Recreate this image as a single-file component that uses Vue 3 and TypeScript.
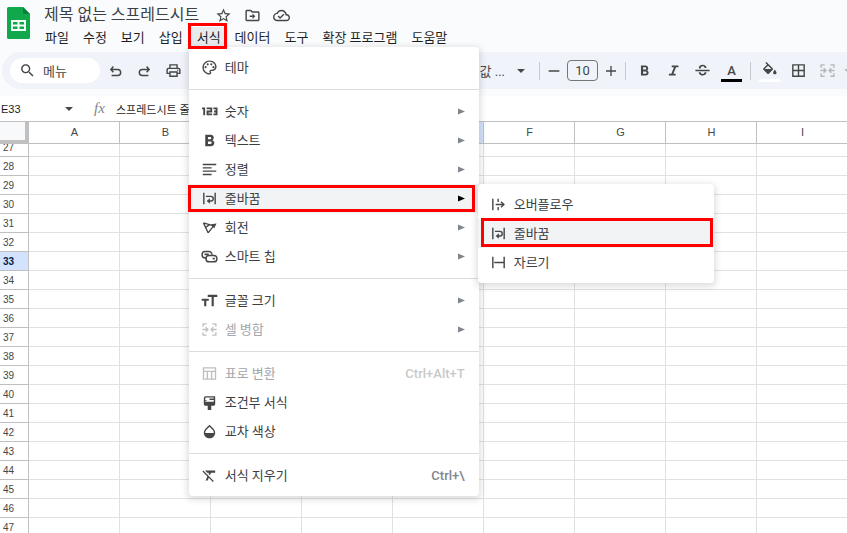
<script setup lang="ts">
import { computed, ref } from 'vue'

interface Shape {
  d: string
  line?: number
}

interface MenuEntry {
  icon: string
  label: string
  submenu?: boolean
  shortcut?: string
  disabled?: boolean
}

const icons: Record<string, Shape[]> = {
  search: [{ d: 'M15.5 14h-.79l-.28-.27C15.41 12.59 16 11.11 16 9.5 16 5.91 13.09 3 9.5 3S3 5.91 3 9.5 5.91 16 9.5 16c1.61 0 3.09-.59 4.23-1.57l.27.28v.79l5 4.99L20.49 19l-4.99-5zm-6 0C7.01 14 5 11.99 5 9.5S7.01 5 9.5 5 14 7.01 14 9.5 11.99 14 9.5 14z' }],
  star: [{ d: 'M22 9.24l-7.19-.62L12 2 9.19 8.63 2 9.24l5.46 4.73L5.82 21 12 17.27 18.18 21l-1.63-7.03L22 9.24zM12 15.4l-3.76 2.27 1-4.28-3.32-2.88 4.38-.38L12 6.1l1.71 4.04 4.38.38-3.32 2.88 1 4.28L12 15.4z' }],
  folder: [{ d: 'M20 6h-8l-2-2H4c-1.1 0-2 .9-2 2v12c0 1.1.9 2 2 2h16c1.1 0 2-.9 2-2V8c0-1.1-.9-2-2-2zm0 12H4V6h5.17l2 2H20v10zm-8-1l4-4-4-4v3H8v2h4v3z' }],
  cloud: [{ d: 'M19.35 10.04C18.67 6.59 15.64 4 12 4 9.11 4 6.6 5.64 5.35 8.04 2.34 8.36 0 10.91 0 14c0 3.31 2.69 6 6 6h13c2.76 0 5-2.24 5-5 0-2.64-2.05-4.78-4.65-4.96zM19 18H6c-2.21 0-4-1.79-4-4 0-2.05 1.53-3.76 3.56-3.97l1.07-.11.5-.95C8.08 7.14 9.94 6 12 6c2.62 0 4.88 1.86 5.39 4.43l.3 1.5 1.53.11c1.56.1 2.78 1.41 2.78 2.96 0 1.65-1.35 3-3 3zm-9-3.82l-2.09-2.09L6.5 13.5 10 17l6.01-6.01-1.41-1.41z' }],
  undo: [{ d: 'M9 6.500L5.500 10.500 9 14.500M5.500 10.500H15a4.300 4.300 0 0 1 0 8.600H6.500', line: 2.1 }],
  redo: [{ d: 'M15 6.500l3.500 4-3.500 4M18.500 10.500H9a4.300 4.300 0 0 0 0 8.600H17.500', line: 2.1 }],
  print: [{ d: 'M19 8h-1V3H6v5H5c-1.66 0-3 1.34-3 3v6h4v4h12v-4h4v-6c0-1.66-1.34-3-3-3zM8 5h8v3H8V5zm8 12v2H8v-4h8v2zm2-2v-2H6v2H4v-4c0-.55.45-1 1-1h14c.55 0 1 .45 1 1v4h-2zM17 11.5a1 1 0 1 0 2 0 1 1 0 1 0-2 0z' }],
  minus: [{ d: 'M4 12h16', line: 2 }],
  plus: [{ d: 'M4.500 12h15M12 4.500v15', line: 2 }],
  bold: [{ d: 'M15.6 11.790c.97-.67 1.65-1.77 1.65-2.79 0-2.26-1.75-4-4-4H7v14h7.04c2.09 0 3.71-1.7 3.71-3.79 0-1.52-.86-2.82-2.15-3.42zM10 7.500h3c.83 0 1.5.67 1.5 1.5s-.67 1.5-1.5 1.5h-3v-3zm3.5 9H10v-3h3.5c.83 0 1.5.67 1.5 1.5s-.67 1.5-1.5 1.5z' }],
  italic: [{ d: 'M9.500 5v2.500h3.200l-3.800 9H5.500V19h9.500v-2.500h-3.200l3.800-9H19V5z' }],
  strike: [{ d: 'M6.85 8.080C6.85 5.370 9.45 4 12.24 4c1.64 0 3 .49 3.9 1.28.77.65 1.46 1.73 1.46 3.24h-2.600c0-.31-.05-.59-.15-.85-.29-.86-1.500-1.580-2.550-1.580-1.86 0-2.840 1.220-2.840 1.900 0 .48.25.88.74 1.21H7.390c-.21-.34-.54-.89-.54-1.120zM22 13v-2H2v2zM14.880 14.600c0 1.400-1.110 2.400-2.580 2.400-1.540 0-2.930-.84-2.930-2.400H6.700c0 .55.08.83.24 1.280.81 2.290 3.090 3.300 5.370 3.300 2.270 0 5.300-1.100 5.300-4.580z' }],
  fill: [{ d: 'M16.56 8.940L7.62 0 6.210 1.410l2.380 2.380-5.150 5.150c-.59.59-.59 1.54 0 2.12l5.5 5.5c.29.29.68.44 1.06.44s.77-.15 1.060-.44l5.5-5.5c.59-.58.59-1.53 0-2.12zM5.210 10L10 5.210 14.790 10H5.210zM19.500 11s-2.400 2.570-2.400 4.100c0 1.300 1.100 2.300 2.400 2.300s2.400-1 2.400-2.300c0-1.530-2.400-4.100-2.400-4.100z' }],
  borders: [{ d: 'M3 3v18h18V3H3zm8 16H5v-6h6v6zm0-8H5V5h6v6zm8 8h-6v-6h6v6zm0-8h-6V5h6v6z' }],
  merge: [{ d: 'M3 8V4h5M16 4h5v4M3 16v4h5M16 20h5v-4M2 12h7.500M6.500 8.700L9.800 12l-3.300 3.300M22 12h-7.500M17.500 8.700L14.200 12l3.300 3.300', line: 1.8 }],
  palette: [
    { d: 'M12 22C6.49 22 2 17.51 2 12S6.49 2 12 2s10 4.04 10 9c0 3.31-2.69 6-6 6h-1.77c-.28 0-.5.22-.5.5 0 .12.05.23.13.33.41.47.64 1.06.64 1.67A2.5 2.5 0 0 1 12 22zm0-18c-4.41 0-8 3.59-8 8s3.59 8 8 8c.28 0 .5-.22.5-.5a.54.54 0 0 0-.14-.35c-.41-.46-.63-1.05-.63-1.65a2.5 2.5 0 0 1 2.5-2.5H16c2.21 0 4-1.79 4-4 0-3.86-3.59-7-8-7z' },
    { d: 'M5 11.500a1.500 1.500 0 1 0 3 0 1.500 1.500 0 1 0-3 0zM8 7.500a1.500 1.500 0 1 0 3 0 1.500 1.500 0 1 0-3 0zM13 7.500a1.500 1.500 0 1 0 3 0 1.500 1.500 0 1 0-3 0zM16 11.500a1.500 1.500 0 1 0 3 0 1.500 1.500 0 1 0-3 0z' },
  ],
  number: [{ d: 'M1.500 7.500H4.500V17.300M8 7.500h6.500v4.500H9.200v4H15.500M17.500 7.500H22v8.500H17.500M18.500 12h3.500', line: 2.6 }],
  text: [{ d: 'M6 4h7.500c2.700 0 4.500 1.700 4.500 4.100 0 1.500-.8 2.700-2 3.400 1.700.6 2.800 2.100 2.800 4 0 2.700-2 4.500-4.800 4.500H6zM9.800 7.200v3h3.100c1 0 1.600-.6 1.600-1.500s-.6-1.500-1.600-1.500zM9.800 13.400v3.400h3.500c1.100 0 1.800-.7 1.800-1.700s-.7-1.700-1.800-1.700z' }],
  align: [{ d: 'M2.500 5h19M2.500 9.700h12.500M2.500 14.300h19M2.500 19h12.500', line: 2 }],
  wrap: [
    { d: 'M4 4v16M20 4v16', line: 2 },
    { d: 'M7 9h7a3.300 3.300 0 0 1 0 6.600h-2.500', line: 2 },
    { d: 'M12.500 11.500v8L8 15.500z' },
  ],
  overflow: [
    { d: 'M4 4v16M11.500 4v4.500M11.500 15.500V20M8 12h12', line: 2 },
    { d: 'M15.500 8L19.500 12l-4 4', line: 2 },
  ],
  clip: [{ d: 'M4 4v16M20 4v16M6 12h13', line: 2 }],
  rotate: [
    { d: 'M3.500 5.500l15.500 4.500M3.500 5.500l6.500 14M10 19.500L17.500 10M6.500 12l5.500-4', line: 1.9 },
    { d: 'M14 7.500l8-1-3.500 7z' },
  ],
  chip: [
    { d: 'M15.500 9.500A4.300 4.300 0 0 0 11 5H6a4.500 4.500 0 0 0 0 9h2', line: 2 },
    { d: 'M11.500 10.500h6.500a4.500 4.500 0 0 1 0 9h-6.500a4.500 4.500 0 0 1 0-9z', line: 2 },
    { d: 'M5 9h6M16.500 15h3', line: 2.4 },
  ],
  size: [{ d: 'M9.500 4v3h5.500v13h3V7h5V4zM1 9.500v3h3.500V20h3v-7.500H11v-3z' }],
  table: [{ d: 'M3.500 4h17v16h-17zM3.500 9h17M9 9v11M15 9v11', line: 1.9 }],
  brush: [
    { d: 'M5 12V5.500A1.500 1.500 0 0 1 6.500 4H19v8', line: 2 },
    { d: 'M4 11h16v3.500a2 2 0 0 1-2 2h-3.500v6h-5v-6H6a2 2 0 0 1-2-2zM12 6.500h7v1.800h-7zM5 8.500h3v1h-3z' },
  ],
  drop: [{ d: 'M17.66 8L12 2.35 6.34 8C4.78 9.56 4 11.64 4 13.64s.78 4.11 2.34 5.67 3.61 2.35 5.66 2.35 4.1-.79 5.66-2.35S20 15.64 20 13.64 19.22 9.56 17.66 8zM6 14c.01-2 .62-3.27 1.76-4.4L12 5.27l4.24 4.38C17.38 10.77 17.99 12 18 14H6z' }],
  clear: [{ d: 'M3.27 5L2 6.27l6.97 6.97L6.5 19h3l1.57-3.66L16.73 21 18 19.73 3.55 5.27 3.27 5zM6 5v.18L8.82 8h2.4l-.72 1.68 2.1 2.1L14.21 8H20V5H6z' }],
}

const titleIcons = [
  { icon: 'star', label: '별표' },
  { icon: 'folder', label: '이동' },
  { icon: 'cloud', label: '문서 상태' },
]

const menus = ['파일', '수정', '보기', '삽입', '서식', '데이터', '도구', '확장 프로그램', '도움말']
const openMenu = ref('서식')

const sections: MenuEntry[][] = [
  [{ icon: 'palette', label: '테마' }],
  [
    { icon: 'number', label: '숫자', submenu: true },
    { icon: 'text', label: '텍스트', submenu: true },
    { icon: 'align', label: '정렬', submenu: true },
    { icon: 'wrap', label: '줄바꿈', submenu: true },
    { icon: 'rotate', label: '회전', submenu: true },
    { icon: 'chip', label: '스마트 칩', submenu: true },
  ],
  [
    { icon: 'size', label: '글꼴 크기', submenu: true },
    { icon: 'merge', label: '셀 병합', submenu: true, disabled: true },
  ],
  [
    { icon: 'table', label: '표로 변환', shortcut: 'Ctrl+Alt+T', disabled: true },
    { icon: 'brush', label: '조건부 서식' },
    { icon: 'drop', label: '교차 색상' },
  ],
  [{ icon: 'clear', label: '서식 지우기', shortcut: 'Ctrl+\\' }],
]
const openItem = ref('줄바꿈')

const wrapModes: MenuEntry[] = [
  { icon: 'overflow', label: '오버플로우' },
  { icon: 'wrap', label: '줄바꿈' },
  { icon: 'clip', label: '자르기' },
]
const wrapMode = ref('줄바꿈')

const fontSize = ref('10')
const cellName = ref('E33')
const formula = ref('스프레드시트 줄바꿈')

const columns = 'ABCDEFGHI'.split('')
const rows = Array.from({ length: 21 }, (_, i) => i + 27)
const activeColumn = computed(() => cellName.value.charAt(0))
const activeRow = computed(() => Number(cellName.value.slice(1)))
</script>

<template>
  <div class="app">
    <header class="top">
      <div class="brand">
        <svg class="logo" viewBox="0 0 23 32" aria-hidden="true">
          <path fill="#0fa94c" d="M1.500 0H16l7 7v23.500A1.500 1.500 0 0 1 21.500 32H1.500A1.500 1.500 0 0 1 0 30.500V1.500A1.500 1.500 0 0 1 1.500 0z" />
          <path fill="#078038" d="M16 0l7 7h-6a1 1 0 0 1-1-1z" />
          <path fill="#f4fff8" fill-rule="evenodd" d="M4 13h15v11H4zM6 15v2.500h4.500V15zM12.500 15v2.500H17V15zM6 19.500V22h4.500v-2.500zM12.500 19.500V22H17v-2.500z" />
        </svg>
        <div class="heading">
          <div class="title-row">
            <h1>제목 없는 스프레드시트</h1>
            <button v-for="t in titleIcons" :key="t.icon" type="button" class="title-button" :aria-label="t.label">
              <svg viewBox="0 0 24 24"><path v-for="s in icons[t.icon]" :key="s.d" :d="s.d" /></svg>
            </button>
          </div>
          <nav class="menubar">
            <div v-for="m in menus" :key="m" class="menu-slot">
              <button type="button" class="menu-button" :class="{ open: m === openMenu }" @click="openMenu = m">{{ m }}</button>
              <span v-if="m === '서식'" class="mark mark-menu"></span>
              <div v-if="m === '서식' && m === openMenu" class="dropdown">
                <ul v-for="(section, i) in sections" :key="i">
                  <li v-for="e in section" :key="e.label">
                    <button type="button" class="item" :class="{ active: e.label === openItem }" :disabled="e.disabled">
                      <svg class="item-icon" viewBox="0 0 24 24">
                        <path v-for="s in icons[e.icon]" :key="s.d" :d="s.d" :class="{ stroke: s.line }" :stroke-width="s.line" />
                      </svg>
                      <span class="label">{{ e.label }}</span>
                      <kbd v-if="e.shortcut">{{ e.shortcut }}</kbd>
                      <svg v-if="e.submenu" class="arrow" viewBox="0 0 7 7"><path d="M0 0.500v6L7 3.500z" /></svg>
                    </button>
                    <template v-if="e.label === openItem">
                      <span class="mark mark-item"></span>
                      <ul class="dropdown flyout">
                        <li v-for="w in wrapModes" :key="w.label">
                          <button type="button" class="item" :class="{ active: w.label === wrapMode }" @click="wrapMode = w.label">
                            <svg class="item-icon" viewBox="0 0 24 24">
                              <path v-for="s in icons[w.icon]" :key="s.d" :d="s.d" :class="{ stroke: s.line }" :stroke-width="s.line" />
                            </svg>
                            <span class="label">{{ w.label }}</span>
                          </button>
                          <span v-if="w.label === wrapMode" class="mark mark-choice"></span>
                        </li>
                      </ul>
                    </template>
                  </li>
                </ul>
              </div>
            </div>
          </nav>
        </div>
      </div>

      <div class="toolbar">
        <button type="button" class="search">
          <svg viewBox="0 0 24 24"><path :d="icons.search[0].d" /></svg>메뉴
        </button>
        <button v-for="n in ['undo', 'redo', 'print']" :key="n" type="button" class="tool" :aria-label="n">
          <svg viewBox="0 0 24 24">
            <path v-for="s in icons[n]" :key="s.d" :d="s.d" :class="{ stroke: s.line }" :stroke-width="s.line" />
          </svg>
        </button>
        <button type="button" class="font-picker">기본값 ...<svg class="caret" viewBox="0 0 8 4"><path d="M0 0h8L4 4z" /></svg></button>
        <span class="divider"></span>
        <div class="size-group">
          <button type="button" aria-label="글꼴 크기 줄이기"><svg viewBox="0 0 24 24"><path :d="icons.minus[0].d" class="stroke" stroke-width="2" /></svg></button>
          <input v-model="fontSize" aria-label="글꼴 크기" />
          <button type="button" aria-label="글꼴 크기 늘리기"><svg viewBox="0 0 24 24"><path :d="icons.plus[0].d" class="stroke" stroke-width="2" /></svg></button>
        </div>
        <span class="divider"></span>
        <button v-for="n in ['bold', 'italic', 'strike']" :key="n" type="button" class="tool" :aria-label="n">
          <svg viewBox="0 0 24 24"><path :d="icons[n][0].d" /></svg>
        </button>
        <button type="button" class="tool swatch" aria-label="텍스트 색상">A</button>
        <span class="divider"></span>
        <button type="button" class="tool swatch white" aria-label="채우기 색상">
          <svg viewBox="0 0 24 24"><path :d="icons.fill[0].d" /></svg>
        </button>
        <button type="button" class="tool" aria-label="테두리">
          <svg viewBox="0 0 24 24"><path :d="icons.borders[0].d" /></svg>
        </button>
        <button type="button" class="tool faded" aria-label="셀 병합">
          <svg viewBox="0 0 24 24"><path :d="icons.merge[0].d" class="stroke" stroke-width="2" /></svg>
        </button>
        <button type="button" class="tool-more faded" aria-label="병합 유형">
          <svg class="caret" viewBox="0 0 8 4"><path d="M0 0h8L4 4z" /></svg>
        </button>
      </div>
    </header>

    <div class="formula-bar">
      <input v-model="cellName" class="cell-name" aria-label="이름 상자" />
      <svg class="caret" viewBox="0 0 8 4"><path d="M0 0h8L4 4z" /></svg>
      <label for="formula">fx</label>
      <input id="formula" v-model="formula" class="formula" />
    </div>

    <main class="sheet">
      <table>
        <thead>
          <tr>
            <th class="corner"></th>
            <th v-for="c in columns" :key="c" :class="{ selected: c === activeColumn }">{{ c }}</th>
          </tr>
        </thead>
        <tbody>
          <tr v-for="(r, i) in rows" :key="r" :class="{ cut: i === 0 }">
            <th :class="{ selected: r === activeRow }"><span>{{ r }}</span></th>
            <td v-for="c in columns" :key="c"></td>
          </tr>
        </tbody>
      </table>
    </main>
  </div>
</template>

<style>
body {
  overflow: hidden;
}
</style>

<style scoped>
.app {
  display: flex;
  flex-direction: column;
  height: 100vh;
  overflow: hidden;
  background: #fff;
  color: #1f1f1f;
  font-family: Roboto, 'Noto Sans CJK KR', sans-serif;
  font-size: 13px;
}

.app *,
.app *::after {
  box-sizing: border-box;
}

button,
input {
  margin: 0;
  padding: 0;
  border: 0;
  background: none;
  color: inherit;
  font: inherit;
}

ul {
  margin: 0;
  padding: 0;
  list-style: none;
}

svg {
  display: block;
  flex: none;
  fill: currentColor;
}

.stroke {
  fill: none;
  stroke: currentColor;
}

.top {
  padding: 3px 0 7px;
  background: #f9fbfd;
}

.brand {
  display: flex;
  align-items: flex-start;
  padding-left: 7px;
}

.logo {
  width: 23px;
  height: 32px;
  margin-top: 4px;
}

.heading {
  margin-left: 8px;
}

.title-row {
  display: flex;
  align-items: center;
  gap: 12px;
  height: 24px;
  padding-left: 6px;
}

h1 {
  margin: 0 4px 0 0;
  color: #3c4043;
  font-size: 16px;
  font-weight: 400;
  line-height: 24px;
  white-space: nowrap;
}

.title-button {
  color: #444746;
}

.title-button svg {
  width: 17px;
  height: 17px;
}

.menubar {
  display: flex;
}

.menu-slot {
  position: relative;
}

.menu-button {
  height: 22px;
  padding: 0 7px;
  line-height: 22px;
  white-space: nowrap;
}

.menu-button.open {
  background: #e8ebee;
}

.mark {
  position: absolute;
  z-index: 3;
  border: 3px solid #f00;
  pointer-events: none;
}

.mark-menu {
  inset: -4px 1px 0 -2px;
}

.mark-item {
  inset: 1px 4px 1px -1px;
}

.mark-choice {
  inset: -1px 1px 1px 3px;
}

.dropdown {
  position: absolute;
  top: calc(100% - 2px);
  left: -1px;
  z-index: 2;
  width: 290px;
  padding: 6px 0;
  border-radius: 4px;
  background: #fff;
  box-shadow: 0 2px 6px 2px rgba(60, 64, 67, 0.16);
}

.dropdown > ul + ul {
  margin-top: 7px;
  padding-top: 7px;
  border-top: 1px solid #dadce0;
}

.dropdown li {
  position: relative;
}

.flyout {
  top: 0;
  left: 289px;
  z-index: 4;
  width: 236px;
}

.item {
  display: flex;
  align-items: center;
  width: 100%;
  height: 29px;
  padding: 0 14px 0 12px;
  color: #3c4043;
  line-height: 20px;
  text-align: left;
}

.item.active {
  background: #f1f3f4;
}

.item:disabled {
  color: #a3a6aa;
}

.item-icon {
  width: 17px;
  height: 17px;
  margin-right: 7px;
  color: #444746;
}

.item:disabled .item-icon {
  color: #bdbfc1;
}

.label {
  flex: 1;
}

.arrow {
  width: 7px;
  height: 7px;
  color: #80868b;
}

.active .arrow {
  color: #000;
}

kbd {
  color: #80868b;
  font-family: Roboto, sans-serif;
  font-size: 13px;
  font-weight: 500;
}

.item:disabled kbd {
  color: #c8c9ca;
}

.toolbar {
  display: flex;
  align-items: center;
  height: 37px;
  margin: 3px 0 0 2px;
  padding-left: 8px;
  border-radius: 19px 0 0 19px;
  background: #f0f3f9;
  color: #444746;
  overflow: hidden;
}

.toolbar > * {
  flex: none;
}

.search {
  display: flex;
  align-items: center;
  gap: 7px;
  width: 90px;
  height: 25px;
  margin-right: 1px;
  padding-left: 9px;
  border-radius: 13px;
  background: #fff;
}

.toolbar svg {
  width: 17px;
  height: 17px;
}

.tool {
  display: flex;
  align-items: center;
  justify-content: center;
  width: 29px;
  height: 25px;
}

.swatch {
  position: relative;
  font-size: 13px;
  font-weight: 500;
  line-height: 22px;
}

.swatch::after {
  content: '';
  position: absolute;
  right: 4px;
  bottom: 1px;
  left: 4px;
  height: 3px;
  background: #000;
}

.white::after {
  background: #fff;
}

.font-picker {
  display: flex;
  align-items: center;
  justify-content: flex-end;
  gap: 12px;
  width: 85px;
  margin-left: 262px;
  padding-right: 10px;
}

.toolbar .caret,
.caret {
  width: 8px;
  height: 4px;
}

.divider {
  width: 1px;
  height: 18px;
  margin: 0 4px;
  background: #c7cacd;
}

.size-group {
  display: flex;
  align-items: center;
  gap: 3px;
}

.size-group button {
  display: flex;
  justify-content: center;
  width: 20px;
}

.size-group svg {
  width: 16px;
  height: 16px;
}

.size-group input {
  width: 31px;
  height: 21px;
  border: 1px solid #747775;
  border-radius: 4px;
  text-align: center;
}

.faded {
  color: #b5b8bc;
}

.tool-more {
  padding-left: 2px;
}

.formula-bar {
  display: flex;
  align-items: center;
  height: 26px;
  flex: none;
  border-bottom: 1px solid #c0c0c0;
  font-size: 11px;
}

.cell-name {
  width: 65px;
  padding-left: 1px;
  font-family: 'Liberation Sans', sans-serif;
}

.formula-bar .caret {
  color: #444746;
}

.formula-bar label {
  width: 43px;
  padding-left: 21px;
  color: #80868b;
  font-family: 'Liberation Serif', serif;
  font-size: 15px;
  font-style: italic;
}

.formula {
  flex: 1;
  min-width: 0;
}

.sheet {
  flex: 1;
  min-height: 0;
  overflow: hidden;
}

table {
  width: 848px;
  border-spacing: 0;
  table-layout: fixed;
}

th,
td {
  height: 19px;
  padding: 0;
  border-right: 1px solid #e1e1e1;
  border-bottom: 1px solid #e1e1e1;
  font-family: 'Liberation Sans', sans-serif;
  font-size: 10px;
  font-weight: 400;
  line-height: 17px;
}

th {
  border-color: #c0c0c0;
  color: #444746;
}

thead th {
  height: 22px;
  padding-left: 1px;
  font-size: 11px;
}

thead .corner {
  width: 29px;
  border-right: 4px solid #c0c0c0;
  border-bottom: 4px solid #c0c0c0;
  background: #f8f9fa;
}

tbody th {
  padding-left: 3px;
  text-align: left;
}

tbody th span {
  display: flex;
  align-items: flex-end;
  height: 18px;
}

.cut th,
.cut td {
  height: 13px;
}

.cut span {
  height: 12px;
  overflow: hidden;
}

.selected {
  background: #d3e3fd;
}

tbody .selected {
  color: #041e49;
  font-weight: 700;
}
</style>
